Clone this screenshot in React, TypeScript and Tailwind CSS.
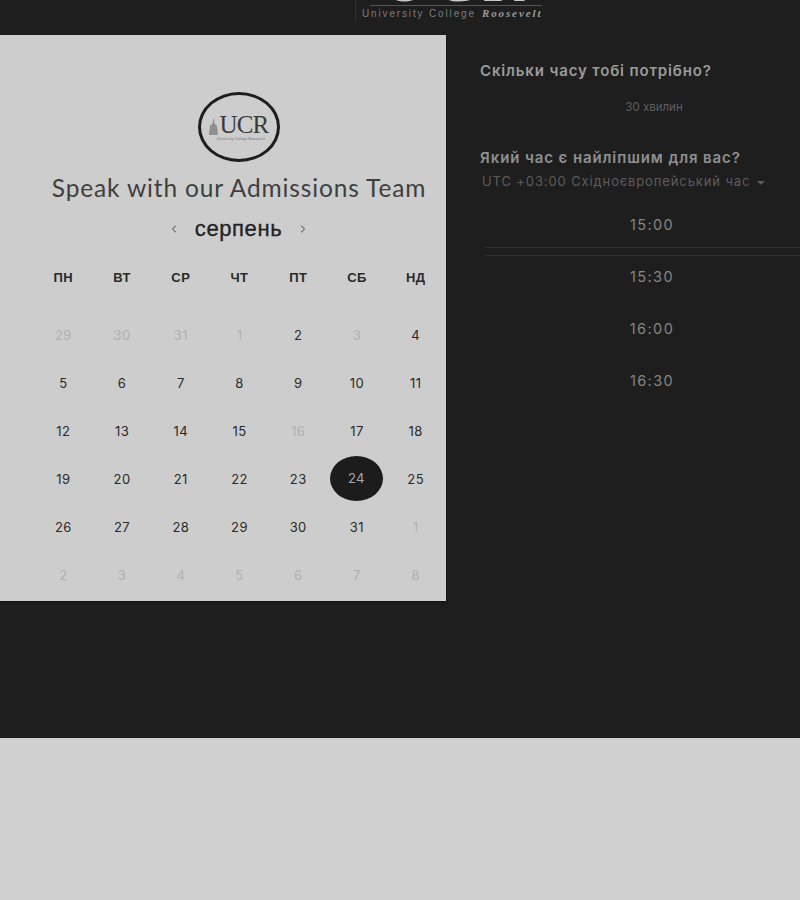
import React from 'react'
import { ChevronLeft, ChevronRight } from 'lucide-react'

const days = ['ПН', 'ВТ', 'СР', 'ЧТ', 'ПТ', 'СБ', 'НД']

const dates: { d: number; muted?: boolean; active?: boolean }[] = [
  { d: 29, muted: true }, { d: 30, muted: true }, { d: 31, muted: true }, { d: 1, muted: true }, { d: 2 }, { d: 3, muted: true }, { d: 4 },
  { d: 5 }, { d: 6 }, { d: 7 }, { d: 8 }, { d: 9 }, { d: 10 }, { d: 11 },
  { d: 12 }, { d: 13 }, { d: 14 }, { d: 15 }, { d: 16, muted: true }, { d: 17 }, { d: 18 },
  { d: 19 }, { d: 20 }, { d: 21 }, { d: 22 }, { d: 23 }, { d: 24, active: true }, { d: 25 },
  { d: 26 }, { d: 27 }, { d: 28 }, { d: 29 }, { d: 30 }, { d: 31 }, { d: 1, muted: true },
  { d: 2, muted: true }, { d: 3, muted: true }, { d: 4, muted: true }, { d: 5, muted: true }, { d: 6, muted: true }, { d: 7, muted: true }, { d: 8, muted: true },
]

const times = ['15:00', '15:30', '16:00', '16:30']

function TopLogo() {
  return (
    <div className="h-[35px] overflow-hidden pl-[355px]">
      <div className="h-[21px] w-[190px] border-l border-[#333] flex flex-col">
        <div className="h-[6px] w-[172px] ml-[14px] border-b border-[#555] overflow-hidden flex justify-center">
          <span className="font-['Liberation_Serif',serif] text-[64px] leading-[6px] mt-[-23px] h-[6px] text-[#c8c8c8] tracking-[6px]">UCR</span>
        </div>
        <div className="mt-[1px] ml-[6px] h-[13px] flex items-center whitespace-nowrap">
          <span className="font-['Liberation_Sans',sans-serif] text-[10px] tracking-[1.85px] text-[#7b7b7b]">University College</span>
          <span className="font-['Liberation_Serif',serif] italic font-bold text-[11px] tracking-[1.9px] text-[#9a9a9a] ml-[6px]">Roosevelt</span>
        </div>
      </div>
    </div>
  )
}

function CircleLogo() {
  return (
    <div className="w-[82px] h-[70px] rounded-[50%] border-[3px] border-[#1d1d1d] flex flex-col items-center justify-center">
      <div className="flex items-end h-[24px] mt-[-1px]">
        <svg width="9" height="16" viewBox="0 0 10 18" className="mb-[2px] mr-[1px]">
          <path d="M4.5 0 L5.5 0 L6 5 L9 8 L10 18 L0 18 L1 8 L4 5 Z" fill="#8f8f8f" />
        </svg>
        <span className="font-['Liberation_Serif',serif] text-[25px] leading-[24px] tracking-[-0.8px] text-[#3a3a3a]">UCR</span>
      </div>
      <div className="font-['Liberation_Sans',sans-serif] text-[3px] leading-[4px] text-[#666] ml-[4px] tracking-[0.35px] whitespace-nowrap">University College Roosevelt</div>
    </div>
  )
}

export default function App() {
  return (
    <div className="w-[800px] h-[900px] bg-[#d0d0d0] overflow-hidden font-['Inter',sans-serif]">
      <div className="bg-[#1e1e1e] h-[738px]">
        <TopLogo />
        <div className="flex">
          <section className="w-[446px] h-[566px] bg-[#cdcdcd] shadow-[0_1px_2px_rgba(0,0,0,0.5)] flex flex-col items-center pl-[34px] shrink-0">
            <div className="mt-[57px] w-[82px] h-[70px] mr-[2px]">
              <CircleLogo />
            </div>
            <h1 className="mt-[11px] font-['Lato',sans-serif] text-[24.5px] leading-[30px] text-[#3f3f3f] tracking-[0.85px] whitespace-nowrap mr-[2px]">Speak with our Admissions Team</h1>
            <div className="mt-[12px] h-[28px] flex items-center mr-[3px]">
              <ChevronLeft size={12} strokeWidth={2.2} className="text-[#777]" />
              <span className="font-['Liberation_Sans',sans-serif] text-[22px] leading-[28px] text-[#222] mx-[15px] tracking-[0.6px] [-webkit-text-stroke:0.3px_#222]">серпень</span>
              <ChevronRight size={12} strokeWidth={2.2} className="text-[#777]" />
            </div>
            <div className="mt-[23px] w-full grid grid-cols-7 pr-[1px]">
              {days.map((d) => (
                <div key={d} className="h-[24px] flex items-center justify-center font-['Liberation_Sans',sans-serif] font-bold text-[13px] tracking-[0.4px] text-[#2a2a2a]">{d}</div>
              ))}
            </div>
            <div className="mt-[22px] w-full grid grid-cols-7 auto-rows-[48px] pr-[1px]">
              {dates.map((c, i) => (
                <div key={i} className="flex items-center justify-center">
                  {c.active ? (
                    <div className="w-[53px] h-[45px] rounded-[50%] bg-[#1c1c1c] text-[#a8a8a8] flex items-center justify-center text-[13px] tracking-[0.3px] mt-[-3px] mr-[1px]">{c.d}</div>
                  ) : (
                    <span className={c.muted ? 'text-[13px] text-[#b0b0b0] tracking-[0.4px]' : 'text-[13px] text-[#2a2a2a] tracking-[0.4px]'}>{c.d}</span>
                  )}
                </div>
              ))}
            </div>
          </section>

          <section className="flex-1 pl-[34px] min-w-0">
            <h2 className="mt-[26px] h-[20px] text-[15px] leading-[20px] font-semibold text-[#9b9b9b] tracking-[0.85px] whitespace-nowrap">Скільки часу тобі потрібно?</h2>
            <div className="mt-[17px] ml-[5px] w-[334px] pl-[4px] h-[18px] flex justify-center text-[11.5px] leading-[18px] text-[#5f5f5f]">30 хвилин</div>
            <h2 className="mt-[32px] h-[20px] text-[15px] leading-[20px] font-semibold text-[#8f8f8f] tracking-[0.9px] whitespace-nowrap">Який час є найліпшим для вас?</h2>
            <div className="mt-[4px] ml-[2px] h-[20px] flex items-center text-[13px] text-[#5c5c5c] tracking-[0.88px] whitespace-nowrap">
              UTC +03:00 Східноєвропейський час
              <span className="ml-[7px] mt-[1px] w-0 h-0 border-x-[4px] border-x-transparent border-t-[4px] border-t-[#5c5c5c]" />
            </div>
            <div className="mt-[12px] ml-[5px] w-[334px]">
              {times.map((t, i) => (
                <div key={t} className={i === 0 ? 'h-[44px] border-b border-[#2e2e2e] flex items-center justify-center pb-[1px]' : i === 1 ? 'h-[43px] mt-[7px] border-t border-[#2e2e2e] flex items-center justify-center' : i === 2 ? 'h-[52px] mt-[5px] flex items-center justify-center' : 'h-[51px] flex items-center justify-center'}>
                  <span className="text-[14.5px] tracking-[1.4px] text-[#858585]">{t}</span>
                </div>
              ))}
            </div>
          </section>
        </div>
      </div>
    </div>
  )
}
